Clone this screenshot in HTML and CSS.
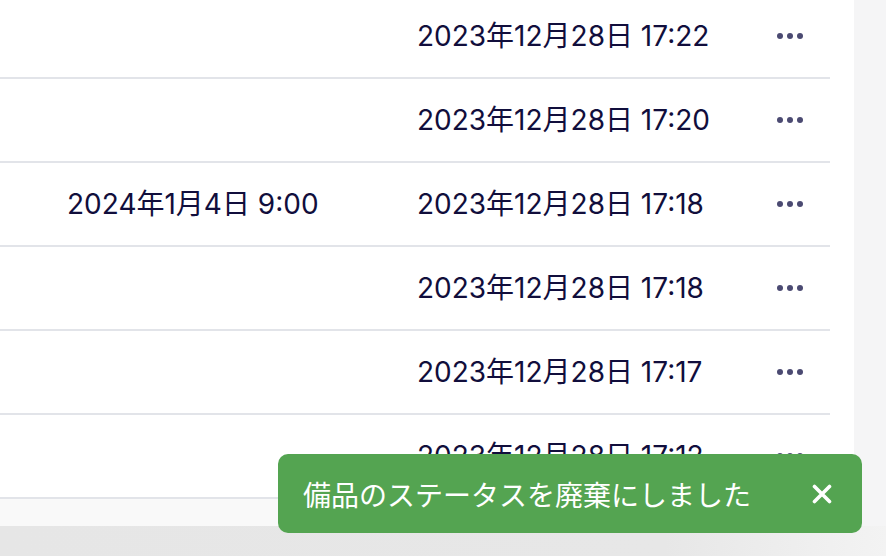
FILE: index.html
```html
<!DOCTYPE html>
<html lang="ja">

<head>
  <meta charset="UTF-8">
  <meta name="viewport" content="width=device-width, initial-scale=1.0">
  <title>備品一覧</title>
  <link rel="stylesheet" href="styles.css">
</head>

<body>
  <div class="page">
    <div class="card">
      <div class="rows">
        <div class="row">
          <div class="cell due"></div>
          <div class="cell updated">2023年12月28日 17:22</div>
          <div class="cell menu"><span class="dots"><i></i><i></i><i></i></span></div>
        </div>
        <div class="row">
          <div class="cell due"></div>
          <div class="cell updated">2023年12月28日 17:20</div>
          <div class="cell menu"><span class="dots"><i></i><i></i><i></i></span></div>
        </div>
        <div class="row">
          <div class="cell due">2024年1月4日 9:00</div>
          <div class="cell updated">2023年12月28日 17:18</div>
          <div class="cell menu"><span class="dots"><i></i><i></i><i></i></span></div>
        </div>
        <div class="row">
          <div class="cell due"></div>
          <div class="cell updated">2023年12月28日 17:18</div>
          <div class="cell menu"><span class="dots"><i></i><i></i><i></i></span></div>
        </div>
        <div class="row">
          <div class="cell due"></div>
          <div class="cell updated">2023年12月28日 17:17</div>
          <div class="cell menu"><span class="dots"><i></i><i></i><i></i></span></div>
        </div>
        <div class="row">
          <div class="cell due"></div>
          <div class="cell updated">2023年12月28日 17:12</div>
          <div class="cell menu"><span class="dots"><i></i><i></i><i></i></span></div>
        </div>
      </div>
      <div class="fade"></div>
    </div>
    <div class="side"></div>
  </div>
  <div class="bottom"></div>

  <div class="toast">
    <span class="toast-text">備品のステータスを廃棄にしました</span>
    <button class="toast-close" aria-label="閉じる">
      <svg width="20" height="20" viewBox="0 0 20 20">
        <path d="M2.5 2.5 L17.5 17.5 M17.5 2.5 L2.5 17.5" stroke="#fff" stroke-width="3.6" stroke-linecap="round" fill="none" />
      </svg>
    </button>
  </div>
</body>

</html>
```

FILE: styles.css
```css
html,
body {
  margin: 0;
  height: 100%;
  overflow: hidden;
}

body {
  background: #f5f5f6;
  font-family: Inter, "Noto Sans CJK JP", sans-serif;
  color: #110e3c;
}

.page {
  display: flex;
  height: 526px;
}

.card {
  width: 854px;
  background: #fff;
  overflow: hidden;
  display: flex;
  flex-direction: column;
}

.rows {
  width: 830px;
  margin-top: -5px;
}

.row {
  display: flex;
  align-items: center;
  height: 82px;
  border-bottom: 2px solid #e2e4e9;
}

.cell {
  font-size: 28px;
  line-height: 1;
  white-space: nowrap;
}

.due {
  width: 350px;
  padding-left: 67px;
}

.updated {
  width: 360px;
}

.dots {
  display: flex;
  gap: 4px;
}

.dots i {
  width: 6px;
  height: 6px;
  border-radius: 50%;
  background: #4b4a72;
}

.fade {
  flex: 1;
  background: #f9f9f9;
}

.side {
  flex: 1;
}

.bottom {
  height: 30px;
  background: linear-gradient(90deg, #e6e6e6 0%, #e7e7e7 75%, #f3f3f3 100%);
}

.toast {
  position: absolute;
  left: 278px;
  top: 454px;
  width: 584px;
  height: 79px;
  box-sizing: border-box;
  padding: 0 30px 0 25px;
  display: flex;
  align-items: center;
  justify-content: space-between;
  background: #54a451;
  border-radius: 10px;
  color: #fff;
}

.toast-text {
  font-family: "Noto Sans CJK JP", sans-serif;
  font-size: 28px;
  line-height: 1;
}

.toast-close {
  border: none;
  background: none;
  padding: 0;
  display: flex;
  cursor: pointer;
}
```
